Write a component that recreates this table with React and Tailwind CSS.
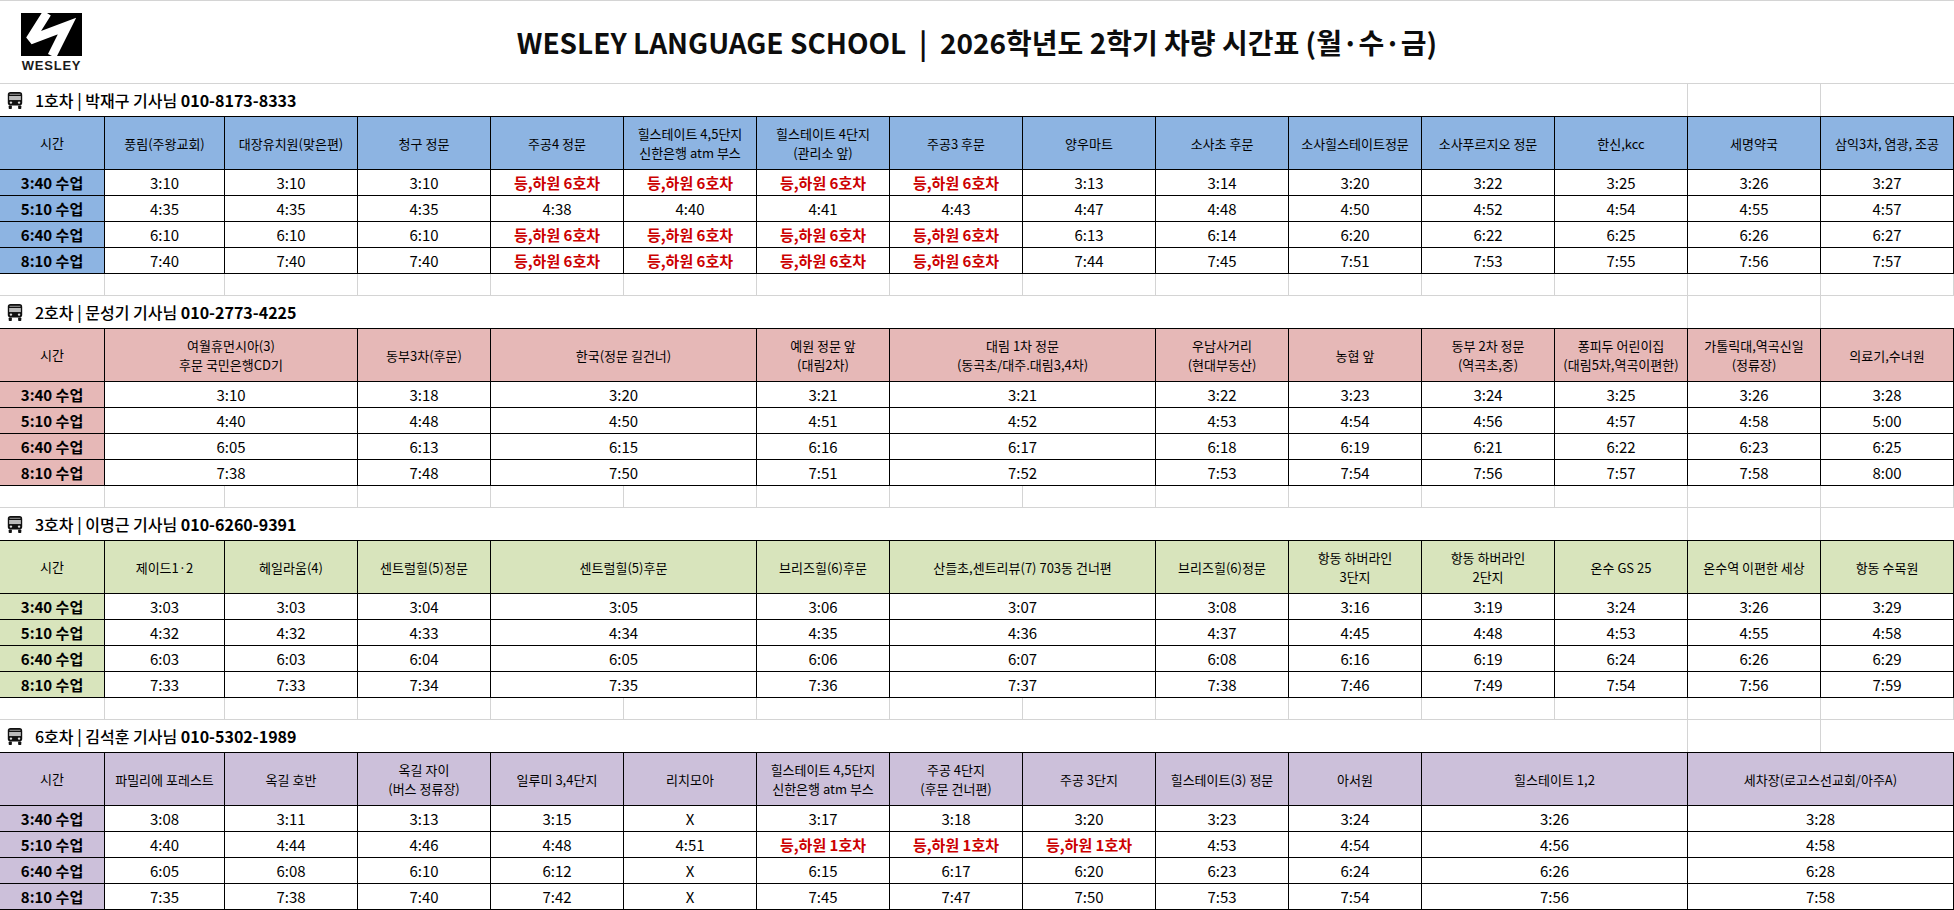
import React from "react";

const R6 = "등,하원 6호차";
const R1 = "등,하원 1호차";

const sections = [
  {
    car: "1호차 | 박재구 기사님",
    phone: "010-8173-8333",
    bg: "bg-[#8db4e2]",
    stops: [
      { name: "풍림(주왕교회)" },
      { name: "대장유치원(맞은편)" },
      { name: "청구 정문" },
      { name: "주공4 정문" },
      { name: "힐스테이트 4,5단지\n신한은행 atm 부스" },
      { name: "힐스테이트 4단지\n(관리소 앞)" },
      { name: "주공3 후문" },
      { name: "양우마트" },
      { name: "소사초 후문" },
      { name: "소사힐스테이트정문" },
      { name: "소사푸르지오 정문" },
      { name: "한신,kcc" },
      { name: "세명약국" },
      { name: "삼익3차, 염광, 조공" },
    ],
    rows: [
      ["3:40 수업", "3:10", "3:10", "3:10", R6, R6, R6, R6, "3:13", "3:14", "3:20", "3:22", "3:25", "3:26", "3:27"],
      ["5:10 수업", "4:35", "4:35", "4:35", "4:38", "4:40", "4:41", "4:43", "4:47", "4:48", "4:50", "4:52", "4:54", "4:55", "4:57"],
      ["6:40 수업", "6:10", "6:10", "6:10", R6, R6, R6, R6, "6:13", "6:14", "6:20", "6:22", "6:25", "6:26", "6:27"],
      ["8:10 수업", "7:40", "7:40", "7:40", R6, R6, R6, R6, "7:44", "7:45", "7:51", "7:53", "7:55", "7:56", "7:57"],
    ],
  },
  {
    car: "2호차 | 문성기 기사님",
    phone: "010-2773-4225",
    bg: "bg-[#e6b8b7]",
    stops: [
      { name: "여월휴먼시아(3)\n후문 국민은행CD기", wide: true },
      { name: "동부3차(후문)" },
      { name: "한국(정문 길건너)", wide: true },
      { name: "예원 정문 앞\n(대림2차)" },
      { name: "대림 1차 정문\n(동곡초/대주.대림3,4차)", wide: true },
      { name: "우남사거리\n(현대부동산)" },
      { name: "농협 앞" },
      { name: "동부 2차 정문\n(역곡초,중)" },
      { name: "퐁피두 어린이집\n(대림5차,역곡이편한)" },
      { name: "가톨릭대,역곡신일\n(정류장)" },
      { name: "의료기,수녀원" },
    ],
    rows: [
      ["3:40 수업", "3:10", "3:18", "3:20", "3:21", "3:21", "3:22", "3:23", "3:24", "3:25", "3:26", "3:28"],
      ["5:10 수업", "4:40", "4:48", "4:50", "4:51", "4:52", "4:53", "4:54", "4:56", "4:57", "4:58", "5:00"],
      ["6:40 수업", "6:05", "6:13", "6:15", "6:16", "6:17", "6:18", "6:19", "6:21", "6:22", "6:23", "6:25"],
      ["8:10 수업", "7:38", "7:48", "7:50", "7:51", "7:52", "7:53", "7:54", "7:56", "7:57", "7:58", "8:00"],
    ],
  },
  {
    car: "3호차 | 이명근 기사님",
    phone: "010-6260-9391",
    bg: "bg-[#d8e4bc]",
    stops: [
      { name: "제이드1·2" },
      { name: "헤일라움(4)" },
      { name: "센트럴힐(5)정문" },
      { name: "센트럴힐(5)후문", wide: true },
      { name: "브리즈힐(6)후문" },
      { name: "산들초,센트리뷰(7) 703동 건너편", wide: true },
      { name: "브리즈힐(6)정문" },
      { name: "항동 하버라인\n3단지" },
      { name: "항동 하버라인\n2단지" },
      { name: "온수 GS 25" },
      { name: "온수역 이편한 세상" },
      { name: "항동 수목원" },
    ],
    rows: [
      ["3:40 수업", "3:03", "3:03", "3:04", "3:05", "3:06", "3:07", "3:08", "3:16", "3:19", "3:24", "3:26", "3:29"],
      ["5:10 수업", "4:32", "4:32", "4:33", "4:34", "4:35", "4:36", "4:37", "4:45", "4:48", "4:53", "4:55", "4:58"],
      ["6:40 수업", "6:03", "6:03", "6:04", "6:05", "6:06", "6:07", "6:08", "6:16", "6:19", "6:24", "6:26", "6:29"],
      ["8:10 수업", "7:33", "7:33", "7:34", "7:35", "7:36", "7:37", "7:38", "7:46", "7:49", "7:54", "7:56", "7:59"],
    ],
  },
  {
    car: "6호차 | 김석훈 기사님",
    phone: "010-5302-1989",
    bg: "bg-[#ccc0da]",
    stops: [
      { name: "파밀리에 포레스트" },
      { name: "옥길 호반" },
      { name: "옥길 자이\n(버스 정류장)" },
      { name: "일루미 3,4단지" },
      { name: "리치모아" },
      { name: "힐스테이트 4,5단지\n신한은행 atm 부스" },
      { name: "주공 4단지\n(후문 건너편)" },
      { name: "주공 3단지" },
      { name: "힐스테이트(3) 정문" },
      { name: "아서원" },
      { name: "힐스테이트 1,2", wide: true },
      { name: "세차장(로고스선교회/아주A)", wide: true },
    ],
    rows: [
      ["3:40 수업", "3:08", "3:11", "3:13", "3:15", "X", "3:17", "3:18", "3:20", "3:23", "3:24", "3:26", "3:28"],
      ["5:10 수업", "4:40", "4:44", "4:46", "4:48", "4:51", R1, R1, R1, "4:53", "4:54", "4:56", "4:58"],
      ["6:40 수업", "6:05", "6:08", "6:10", "6:12", "X", "6:15", "6:17", "6:20", "6:23", "6:24", "6:26", "6:28"],
      ["8:10 수업", "7:35", "7:38", "7:40", "7:42", "X", "7:45", "7:47", "7:50", "7:53", "7:54", "7:56", "7:58"],
    ],
  },
];

const cols = "grid grid-cols-[105px_120px_repeat(13,minmax(0,1fr))]";

function Logo() {
  return (
    <div className="flex flex-col items-center w-[61px] ml-[21px] mt-[12px]">
      <svg width="61" height="43" viewBox="0 0 61 43">
        <rect width="61" height="43" fill="#000" />
        <polyline
          points="26,0 9,27 46,13 31,43"
          fill="none"
          stroke="#fff"
          strokeWidth="9"
          strokeLinejoin="miter"
          strokeMiterlimit="3"
        />
      </svg>
      <div className="mt-[3px] text-[13px] leading-[14px] font-bold tracking-[0.8px] text-[#1a1a1a] font-['Liberation_Sans',sans-serif]">
        WESLEY
      </div>
    </div>
  );
}

function Bus() {
  return (
    <svg width="18" height="19" viewBox="0 0 20 21">
      <rect x="2" y="1" width="16" height="15" rx="3" fill="#111" />
      <rect x="4" y="3" width="12" height="1.3" fill="#888" />
      <rect x="3.5" y="5.5" width="13" height="4.5" fill="#bbb" />
      <circle cx="5.5" cy="12.8" r="1.3" fill="#ddd" />
      <circle cx="14.5" cy="12.8" r="1.3" fill="#ddd" />
      <rect x="3" y="16" width="3.5" height="4" rx="0.8" fill="#111" />
      <rect x="13.5" y="16" width="3.5" height="4" rx="0.8" fill="#111" />
    </svg>
  );
}

function Spacer() {
  return (
    <div className={`${cols} h-[22px] border-b border-[#d4d4d4]`}>
      {Array.from({ length: 15 }).map((_, i) => (
        <div key={i} className="border-r border-[#d4d4d4]" />
      ))}
    </div>
  );
}

function Section({ s }) {
  return (
    <div>
      <div className={`${cols} h-[32px]`}>
        <div className="col-span-13 flex items-center pl-[6px] gap-[11px] border-r border-[#d4d4d4]">
          <Bus />
          <span className="text-[16px] leading-none text-black">
            <span className="font-medium">{s.car} </span>
            <span className="font-bold">{s.phone}</span>
          </span>
        </div>
        <div className="border-r border-[#d4d4d4]" />
        <div />
      </div>
      <div className={`${cols} grid-rows-[53px_repeat(4,26px)] border-t border-black`}>
        <div className={`${s.bg} border-r border-b border-black flex items-center justify-center text-[13px]`}>
          시간
        </div>
        {s.stops.map((st, i) => (
          <div
            key={i}
            className={`${s.bg} ${st.wide ? "col-span-2" : ""} border-r border-b border-black flex items-center justify-center text-center text-[13px] leading-[19px] whitespace-pre`}
          >
            {st.name}
          </div>
        ))}
        {s.rows.map((row, r) =>
          row.map((cell, c) => {
            if (c === 0) {
              return (
                <div
                  key={r + "-" + c}
                  className={`${s.bg} border-r border-b border-black flex items-center justify-center text-[15px] font-bold leading-none`}
                >
                  {cell}
                </div>
              );
            }
            const st = s.stops[c - 1];
            const red = cell.startsWith("등");
            return (
              <div
                key={r + "-" + c}
                className={`${st.wide ? "col-span-2" : ""} bg-white border-r border-b border-black flex items-center justify-center text-[15px] leading-none whitespace-pre ${red ? "text-[#cc0000] font-bold" : "text-black"}`}
              >
                {cell}
              </div>
            );
          })
        )}
      </div>
    </div>
  );
}

export default function App() {
  return (
    <div className="w-[1954px] h-[910px] bg-white overflow-hidden font-['Noto_Sans_CJK_KR','Noto_Sans',sans-serif] text-black">
      <div className="grid grid-cols-[1fr_auto_1fr] h-[84px] border-t border-b border-[#d4d4d4]">
        <div>
          <Logo />
        </div>
        <h1 className="self-center text-[28px] font-bold leading-none text-[#0d0d0d] whitespace-pre">
          WESLEY LANGUAGE SCHOOL  |  2026학년도 2학기 차량 시간표 (월·수·금)
        </h1>
        <div />
      </div>
      {sections.map((s, i) => (
        <div key={i}>
          <Section s={s} />
          {i < sections.length - 1 && <Spacer />}
        </div>
      ))}
    </div>
  );
}
